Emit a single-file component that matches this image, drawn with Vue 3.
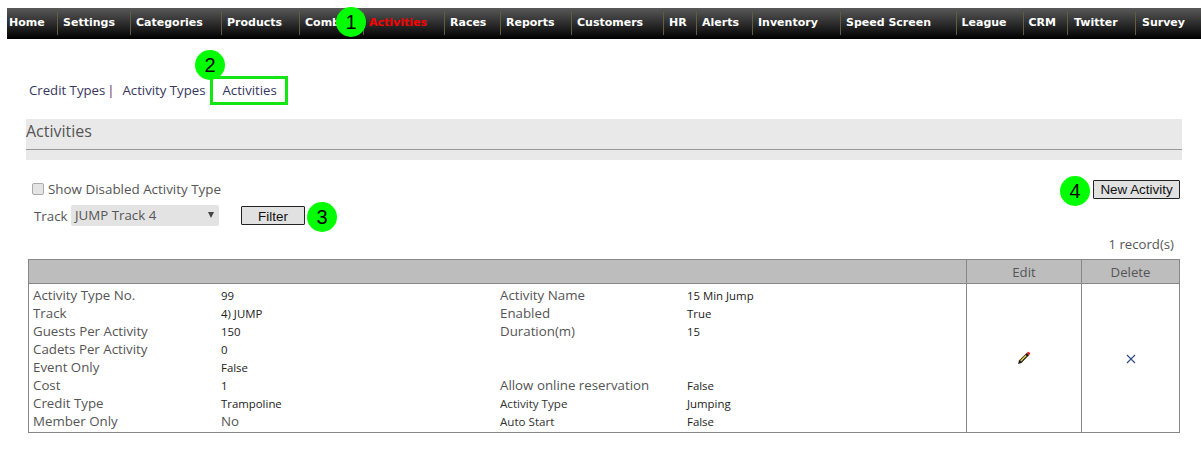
<script setup>
const nav = [
  ['Home', 50], ['Settings', 73], ['Categories', 91], ['Products', 78], ['Combos', 64],
  ['Activities', 81], ['Races', 56], ['Reports', 71], ['Customers', 92], ['HR', 33],
  ['Alerts', 56], ['Inventory', 88], ['Speed Screen', 115.5], ['League', 67], ['CRM', 44.5],
  ['Twitter', 68], ['Survey', 59]
]
const rows = [
  ['Activity Type No.', '99', 'Activity Name', '15 Min Jump'],
  ['Track', '4) JUMP', 'Enabled', 'True'],
  ['Guests Per Activity', '150', 'Duration(m)', '15'],
  ['Cadets Per Activity', '0', '', ''],
  ['Event Only', 'False', '', ''],
  ['Cost', '1', 'Allow online reservation', 'False'],
  ['Credit Type', 'Trampoline', 'Activity Type', 'Jumping'],
  ['Member Only', 'No', 'Auto Start', 'False']
]
</script>

<template>
  <div class="page">
    <nav class="nav">
      <a
        v-for="(n, i) in nav"
        :key="n[0]"
        class="nav-item"
        :class="{ active: n[0] === 'Activities', first: i === 0, late: i > 14 }"
        :style="{ width: n[1] + 'px' }"
      >{{ n[0] }}</a>
    </nav>

    <div class="sub">
      <a class="sub-link">Credit Types</a>
      <span class="pipe">|</span>
      <a class="sub-link second">Activity Types</a>
      <a class="sub-link boxed">Activities</a>
    </div>

    <div class="title-panel">
      <div class="title">Activities</div>
    </div>

    <div class="filters">
      <div class="filter-left">
        <label class="check"><span class="box"></span>Show Disabled Activity Type</label>
        <div class="track">
          <span class="track-label">Track</span>
          <span class="select">JUMP Track 4<span class="caret"></span></span>
          <button class="btn filter">Filter</button>
        </div>
      </div>
      <button class="btn new">New Activity</button>
    </div>

    <div class="records">1 record(s)</div>

    <div class="table">
      <div class="head">
        <div class="h-main"></div>
        <div class="h-cell edit">Edit</div>
        <div class="h-cell del">Delete</div>
      </div>
      <div class="body">
        <div class="details">
          <template v-for="r in rows" :key="r[0]">
            <span class="lbl">{{ r[0] }}</span>
            <span class="val" :class="{ big: r[1] === 'No' }">{{ r[1] }}</span>
            <span class="lbl" :class="{ dark: r[2] === 'Activity Type' || r[2] === 'Auto Start' }">{{ r[2] }}</span>
            <span class="val">{{ r[3] }}</span>
          </template>
        </div>
        <div class="action edit">
          <svg width="14" height="14" viewBox="0 0 14 14">
            <path d="M1 13 L2 9.6 L10 1.8 L12.2 4 L4.4 12 Z" fill="#1a1a1a" />
            <path d="M3.2 9.4 L8.6 4 L9.6 5 L4.2 10.4 Z" fill="#e8d23a" />
            <path d="M9.6 2.2 L10.9 .9 Q11.4 .6 11.9 1 L13 2.1 Q13.4 2.6 13 3.1 L11.8 4.4 Z" fill="#e0202c" />
          </svg>
        </div>
        <div class="action del">
          <svg width="10" height="10" viewBox="0 0 10 10">
            <path d="M1 1 L9 9 M9 1 L1 9" stroke="#2b4a8b" stroke-width="1.1" fill="none" />
          </svg>
        </div>
      </div>
    </div>

    <span class="mark m1">1</span>
    <span class="mark m2">2</span>
    <span class="mark m3">3</span>
    <span class="mark m4">4</span>
  </div>
</template>

<style>
html, body { margin: 0; background: #fff; }
</style>

<style scoped>
.page {
  position: relative;
  width: 1201px;
  height: 452px;
  overflow: hidden;
  font-family: "Open Sans", "Noto Sans", sans-serif;
  color: #555;
}
.nav {
  display: flex;
  margin: 8px 0 0 7px;
  height: 31px;
  background: linear-gradient(#595959, #000);
}
.nav-item {
  box-sizing: border-box;
  height: 23px;
  margin-top: 4px;
  padding-left: 5px;
  border-left: 1px solid #5f5f3f;
  font: bold 11px/22px "DejaVu Sans", sans-serif;
  color: #fff;
  white-space: nowrap;
}
.nav-item.first { border-left: 0; padding-left: 2px; }
.nav-item.late { padding-left: 6px; }
.nav-item.active { color: #f00; }
.sub {
  display: flex;
  align-items: center;
  height: 29px;
  margin: 37px 0 0 29px;
  font-size: 13.2px;
  color: #36365e;
}
.sub-link { white-space: nowrap; line-height: 27px; }
.pipe { margin-left: 2px; color: #5a2a6a; line-height: 27px; }
.second { margin-left: 8px; }
.boxed {
  box-sizing: border-box;
  width: 78px;
  height: 29px;
  margin-left: 5px;
  padding-left: 9px;
  border: 3px solid #13e613;
  line-height: 23px;
}
.title-panel {
  box-sizing: border-box;
  height: 41px;
  margin: 14px 19px 0 26px;
  background: #e9e9e9;
}
.title {
  height: 30px;
  font-size: 16px;
  line-height: 24px;
  color: #555;
  border-bottom: 1px solid #999;
}
.filters {
  display: flex;
  justify-content: space-between;
  margin: 20px 21px 0 32px;
}
.check {
  display: flex;
  align-items: center;
  height: 17px;
  font-size: 13.4px;
  color: #555;
}
.box {
  box-sizing: border-box;
  width: 12px;
  height: 12px;
  margin-right: 4px;
  border: 1px solid #aaa;
  border-radius: 2px;
  background: #e4e4e4;
}
.track {
  display: flex;
  align-items: center;
  height: 21px;
  margin: 8px 0 0 2px;
}
.track-label { width: 37px; font-size: 13.3px; color: #555; }
.select {
  position: relative;
  box-sizing: border-box;
  width: 148px;
  height: 21px;
  padding-left: 4px;
  background: #e3e3e3;
  border-radius: 2px;
  font-size: 13.3px;
  line-height: 21px;
  color: #555;
}
.caret {
  position: absolute;
  right: 5px;
  top: 7px;
  border-left: 3.5px solid transparent;
  border-right: 3.5px solid transparent;
  border-top: 6px solid #444;
}
.btn {
  box-sizing: border-box;
  height: 19px;
  padding: 1px 0 0;
  border: 1px solid #222;
  border-radius: 1px;
  background: #e1e1e1;
  font: 13.4px "Liberation Sans", sans-serif;
  color: #111;
}
.filter { width: 64px; margin-left: 22px; }
.new { width: 87px; padding-top: 0; }
.records {
  margin: 8px 27px 0 0;
  height: 20px;
  line-height: 20px;
  font-size: 13.2px;
  text-align: right;
  color: #555;
}
.table {
  box-sizing: border-box;
  width: 1152px;
  height: 174px;
  margin: 5px 0 0 28px;
  border: 1px solid #888;
}
.head { display: flex; height: 23px; background: #bdbdbd; border-bottom: 1px solid #888; }
.h-main { flex: 1; }
.h-cell {
  box-sizing: border-box;
  border-left: 1px solid #888;
  text-align: center;
  font-size: 13.2px;
  line-height: 25px;
  color: #555;
}
.edit { width: 115px; }
.del { width: 98px; }
.body { display: flex; height: 149px; }
.details {
  flex: 1;
  display: grid;
  grid-template-columns: 188px 279px 187px 1fr;
  grid-auto-rows: 18px;
  padding: 2px 0 0 4px;
  align-items: center;
}
.lbl { font-size: 13.3px; color: #555; white-space: nowrap; }
.lbl.dark { font-size: 11.6px; color: #333; }
.val { font-size: 11.4px; color: #222; white-space: nowrap; }
.val.big { font-size: 13.3px; color: #555; }
.action {
  box-sizing: border-box;
  display: flex;
  align-items: center;
  justify-content: center;
  border-left: 1px solid #888;
  padding-bottom: 1px;
}
.action.del { padding-bottom: 0; }
.mark {
  position: absolute;
  width: 30px;
  height: 30px;
  border-radius: 50%;
  background: #0f0;
  color: #000;
  font: 20px/30px "Liberation Sans", sans-serif;
  text-align: center;
}
.m1 { left: 336px; top: 7px; }
.m2 { left: 195px; top: 50px; }
.m3 { left: 307px; top: 202px; }
.m4 { left: 1060px; top: 176px; }
</style>
